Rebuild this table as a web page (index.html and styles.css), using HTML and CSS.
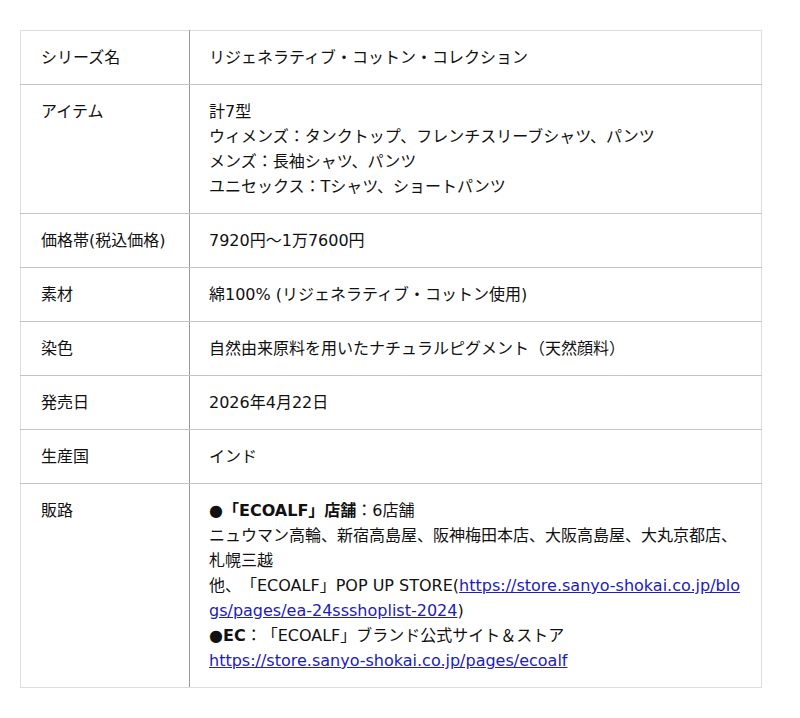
FILE: index.html
```html
<!DOCTYPE html>
<html lang="ja">
<head>
<meta charset="utf-8">
<link rel="stylesheet" href="styles.css">
</head>
<body>
<div class="wrap">
<table class="spec">
<tr><th>シリーズ名</th><td>リジェネラティブ・コットン・コレクション</td></tr>
<tr><th>アイテム</th><td>計7型<br>ウィメンズ：タンクトップ、フレンチスリーブシャツ、パンツ<br>メンズ：長袖シャツ、パンツ<br>ユニセックス：Tシャツ、ショートパンツ</td></tr>
<tr><th>価格帯(税込価格)</th><td>7920円～1万7600円</td></tr>
<tr><th>素材</th><td>綿100% (リジェネラティブ・コットン使用)</td></tr>
<tr><th>染色</th><td>自然由来原料を用いたナチュラルピグメント（天然顔料）</td></tr>
<tr><th>発売日</th><td>2026年4月22日</td></tr>
<tr><th>生産国</th><td>インド</td></tr>
<tr><th>販路</th><td><b>●「ECOALF」店舗</b>：6店舗<br>ニュウマン高輪、新宿高島屋、阪神梅田本店、大阪高島屋、大丸京都店、札幌三越<br>他、「ECOALF」POP UP STORE(<a class="url" href="#">https://store.sanyo-shokai.co.jp/blogs/pages/ea-24ssshoplist-2024</a>)<br><b>●EC</b>：「ECOALF」ブランド公式サイト＆ストア<br><a href="#">https://store.sanyo-shokai.co.jp/pages/ecoalf</a></td></tr>
</table>
</div>
</body>
</html>
```

FILE: styles.css
```css
html, body {
  margin: 0;
  padding: 0;
  background: #fff;
}
.wrap {
  padding: 30px 38px 30px 20px;
}
.spec {
  width: 742px;
  border-collapse: collapse;
  font-family: "DejaVu Sans", "Noto Sans CJK JP", sans-serif;
  font-size: 16px;
  line-height: 25px;
  color: #111;
  border: 1px solid #ddd;
  text-spacing-trim: space-all;
}
.spec th, .spec td {
  text-align: left;
  vertical-align: top;
  font-weight: normal;
  padding: 14px 20px 14px 20px;
  border-top: 1px solid #c4c4c4;
  border-bottom: 1px solid #c4c4c4;
  word-break: break-all;
}
.spec td {
  padding-left: 19px;
}
.spec tr:first-child th, .spec tr:first-child td { border-top-color: #ddd; }
.spec tr:last-child th, .spec tr:last-child td { border-bottom-color: #ddd; }
.spec th {
  width: 128px;
  border-right: 1px solid #9a9a9a;
}
.spec b { font-weight: bold; }
.spec a { color: #2020b8; text-decoration: underline; }
```
